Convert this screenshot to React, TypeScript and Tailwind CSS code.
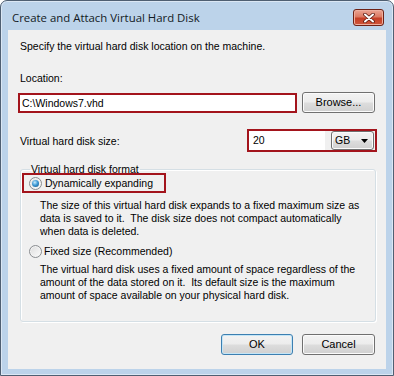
import React from 'react';

const body = { fontFamily: '"Liberation Sans", Arial, sans-serif' };
const title = { fontFamily: '"Open Sans", "Noto Sans", sans-serif' };

function Radio({ checked }: { checked?: boolean }) {
  return (
    <span className="flex h-[13px] w-[13px] shrink-0 items-center justify-center rounded-full border border-[#8a8d90] bg-[linear-gradient(135deg,#dcdcdc,#fdfdfd)] shadow-[inset_0_0_0_1px_#f4f4f4]">
      {checked && (
        <span className="h-[7px] w-[7px] rounded-full bg-[radial-gradient(circle_at_40%_35%,#c9ecfc_0%,#3f9ad6_45%,#0e4d7e_100%)]" />
      )}
    </span>
  );
}

function WinButton({ children, primary }: { children: React.ReactNode; primary?: boolean }) {
  return (
    <button
      className={
        'h-[21px] rounded-[3px] border text-[11px] text-black bg-[linear-gradient(#f3f3f3_0%,#ececec_48%,#dddddd_52%,#d0d0d0_100%)] ' +
        (primary
          ? 'w-[72px] border-[#3c7fb1] shadow-[inset_0_0_0_1px_#c4e5f6]'
          : 'w-[73px] border-[#707070] shadow-[inset_0_0_0_1px_#fbfbfb]')
      }
    >
      {children}
    </button>
  );
}

export default function App() {
  return (
    <div className="h-[376px] w-[394px] bg-white">
      <div className="flex h-[376px] w-[394px] flex-col rounded-t-[7px] border border-[#4f5f72] bg-[#bcd3ea] shadow-[inset_0_0_0_1px_#dbe7f4]">
        {/* Title bar */}
        <div className="flex h-[29px] items-start justify-between pl-[11px] pr-[9px] pt-[8px]">
          <span style={title} className="mt-[1px] text-[11.4px] leading-[16px] text-[#121a24]">
            Create and Attach Virtual Hard Disk
          </span>
          <div className="flex h-[17px] w-[31px] items-center justify-center rounded-[3px] border border-[#6e2216] bg-[linear-gradient(#eba493_0%,#dc7a63_45%,#c53f26_55%,#cf563b_100%)] shadow-[inset_0_0_0_1px_#eeae9e]">
            <svg width="12" height="10" viewBox="0 0 12 10">
              <path d="M2 1.5 L10 8.5 M10 1.5 L2 8.5" stroke="#5a1a10" strokeWidth="3.6" strokeLinecap="round" />
              <path d="M2 1.5 L10 8.5 M10 1.5 L2 8.5" stroke="#ffffff" strokeWidth="2" strokeLinecap="round" />
            </svg>
          </div>
        </div>

        {/* Client area */}
        <div
          style={body}
          className="mx-[7px] mb-[6px] flex flex-1 flex-col bg-[#f0f0f0] pl-[10px] pr-[11px] text-[10.5px] text-black"
        >
          <p className="ml-[2px] mt-[9px] leading-[14px]">Specify the virtual hard disk location on the machine.</p>
          <p className="ml-[2px] mt-[18px] leading-[14px]">Location:</p>

          <div className="mt-[7px] flex items-start justify-between">
            <div className="mt-[1px] flex h-[20px] w-[279px] items-center border-2 border-[#a3141c] bg-white pl-[2px] leading-[14px]">
              C:\Windows7.vhd
            </div>
            <WinButton>Browse...</WinButton>
          </div>

          <div className="mt-[16px] flex items-center justify-between">
            <span className="ml-[2px] leading-[14px]">Virtual hard disk size:</span>
            <div className="mr-[-2px] flex h-[23px] w-[130px] items-center border-2 border-[#a3141c]">
              <div className="flex h-[19px] w-[76px] items-center bg-white pl-[4px]">20</div>
              <div className="ml-[6px] flex h-[19px] w-[43px] items-center justify-between rounded-[3px] border border-[#707070] bg-[linear-gradient(#f3f3f3_0%,#ececec_48%,#dddddd_52%,#d0d0d0_100%)] pl-[3px] pr-[5px] shadow-[inset_0_0_0_1px_#fbfbfb]">
                <span>GB</span>
                <svg width="7" height="4" viewBox="0 0 7 4">
                  <path d="M0 0 H7 L3.5 4 Z" fill="#000" />
                </svg>
              </div>
            </div>
          </div>

          <fieldset className="ml-[2px] mr-[-1px] mt-[11px] rounded-[3px] border border-[#d5dfe5] pb-[19px] shadow-[inset_1px_1px_0_#ffffff,1px_1px_0_#ffffff]">
            <legend className="ml-[9px] px-[1px] leading-[12px]">Virtual hard disk format</legend>

            <div className="ml-[1px] mt-[-2px] flex h-[20px] w-[144px] items-center border-2 border-[#a3141c] pl-[5px]">
              <Radio checked />
              <span className="ml-[3px] leading-[14px]">Dynamically expanding</span>
            </div>
            <p className="ml-[19px] mt-[6px] leading-[13px]">
              The size of this virtual hard disk expands to a fixed maximum size as
              <br />
              data is saved to it.&nbsp; The disk size does not compact automatically
              <br />
              when data is deleted.
            </p>

            <div className="ml-[8px] mt-[6px] flex h-[14px] items-center">
              <Radio />
              <span className="ml-[2px] leading-[14px]">Fixed size (Recommended)</span>
            </div>
            <p className="ml-[19px] mt-[5px] leading-[13px]">
              The virtual hard disk uses a fixed amount of space regardless of the
              <br />
              amount of the data stored on it.&nbsp; Its default size is the maximum
              <br />
              amount of space available on your physical hard disk.
            </p>
          </fieldset>

          <div className="mt-[12px] flex justify-end gap-[9px]">
            <WinButton primary>OK</WinButton>
            <WinButton>Cancel</WinButton>
          </div>
        </div>
      </div>
    </div>
  );
}
